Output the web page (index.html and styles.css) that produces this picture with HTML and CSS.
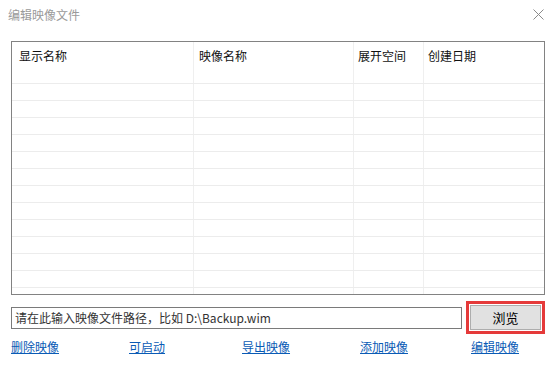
FILE: index.html
```html
<!DOCTYPE html>
<html lang="zh-CN">
<head>
    <meta charset="UTF-8">
    <title>编辑映像文件</title>
    <link rel="stylesheet" href="styles.css">
</head>
<body>
    <div class="dialog">
        <div class="titlebar">
            <span class="title">编辑映像文件</span>
            <svg class="close" width="11" height="11" viewBox="0 0 11 11">
                <path d="M0.5 0.5 L10.5 10.5 M10.5 0.5 L0.5 10.5" stroke="#8a8a8a" stroke-width="1" fill="none"/>
            </svg>
        </div>

        <div class="list">
            <div class="list-row list-head">
                <div class="cell c1">显示名称</div>
                <div class="cell c2">映像名称</div>
                <div class="cell c3">展开空间</div>
                <div class="cell c4">创建日期</div>
            </div>
            <div id="rows"></div>
        </div>

        <div class="path-row">
            <input class="path-input" type="text" value="请在此输入映像文件路径，比如 D:\Backup.wim">
            <div class="browse-box">
                <button class="browse">浏览</button>
            </div>
        </div>

        <div class="links">
            <a href="#">删除映像</a>
            <a href="#">可启动</a>
            <a href="#">导出映像</a>
            <a href="#">添加映像</a>
            <a href="#">编辑映像</a>
        </div>
    </div>

    <script>
        // 空白行
        const rows = document.getElementById('rows');
        for (let i = 0; i < 13; i++) {
            const row = document.createElement('div');
            row.className = 'list-row';
            ['c1', 'c2', 'c3', 'c4'].forEach(c => {
                const cell = document.createElement('div');
                cell.className = 'cell ' + c;
                row.appendChild(cell);
            });
            rows.appendChild(row);
        }
    </script>
</body>
</html>
```

FILE: styles.css
```css
body {
    margin: 0;
    background: #fff;
    font-family: "Noto Sans CJK SC", "Liberation Sans", sans-serif;
    font-size: 12px;
}
.dialog {
    width: 554px;
    height: 366px;
    overflow: hidden;
}
.titlebar {
    height: 30px;
    display: flex;
    align-items: center;
    justify-content: space-between;
    padding: 0 10px 0 8px;
}
.title {
    color: #9a9a9a;
    margin-top: -1px;
}
.close {
    margin-top: -2px;
}
.list {
    margin: 11px 0 0 11px;
    width: 534px;
    height: 254px;
    box-sizing: border-box;
    border: 1px solid #828282;
    overflow: hidden;
}
.list-row {
    display: flex;
    height: 17px;
    box-sizing: border-box;
    border-bottom: 1px solid #ececec;
}
.list-head {
    height: 42px;
    color: #111;
}
.cell {
    box-sizing: border-box;
    border-right: 1px solid #efefef;
    padding-top: 5px;
    line-height: 17px;
}
.c1 { width: 182px; padding-left: 7px; }
.c2 { width: 160px; padding-left: 5px; }
.c3 { width: 70px; padding-left: 4px; }
.c4 { flex: 1; padding-left: 4px; border-right: none; }
.path-row {
    display: flex;
    align-items: center;
    gap: 4px;
    margin: 6px 0 0 11px;
    height: 33px;
}
.path-input {
    width: 451px;
    height: 22px;
    box-sizing: border-box;
    border: 1px solid #7a7a7a;
    padding: 0 3px;
    font-family: "Noto Sans CJK SC", "Liberation Sans", sans-serif;
    font-size: 12px;
    color: #333;
    margin: 0;
}
.browse-box {
    width: 79px;
    height: 33px;
    box-sizing: border-box;
    border: 3px solid #e53a3a;
    padding: 1px;
}
.browse {
    width: 100%;
    height: 100%;
    margin: 0;
    background: #e1e1e1;
    border: 1px solid #adadad;
    font-family: "Noto Sans CJK SC", "Liberation Sans", sans-serif;
    font-size: 13px;
    color: #000;
    padding: 0;
}
.links {
    display: grid;
    grid-template-columns: 118px 113px 118px 111px auto;
    margin: 5px 0 0 11px;
    line-height: 16px;
}
.links a {
    color: #0a5bb5;
    text-decoration: underline;
}
```
